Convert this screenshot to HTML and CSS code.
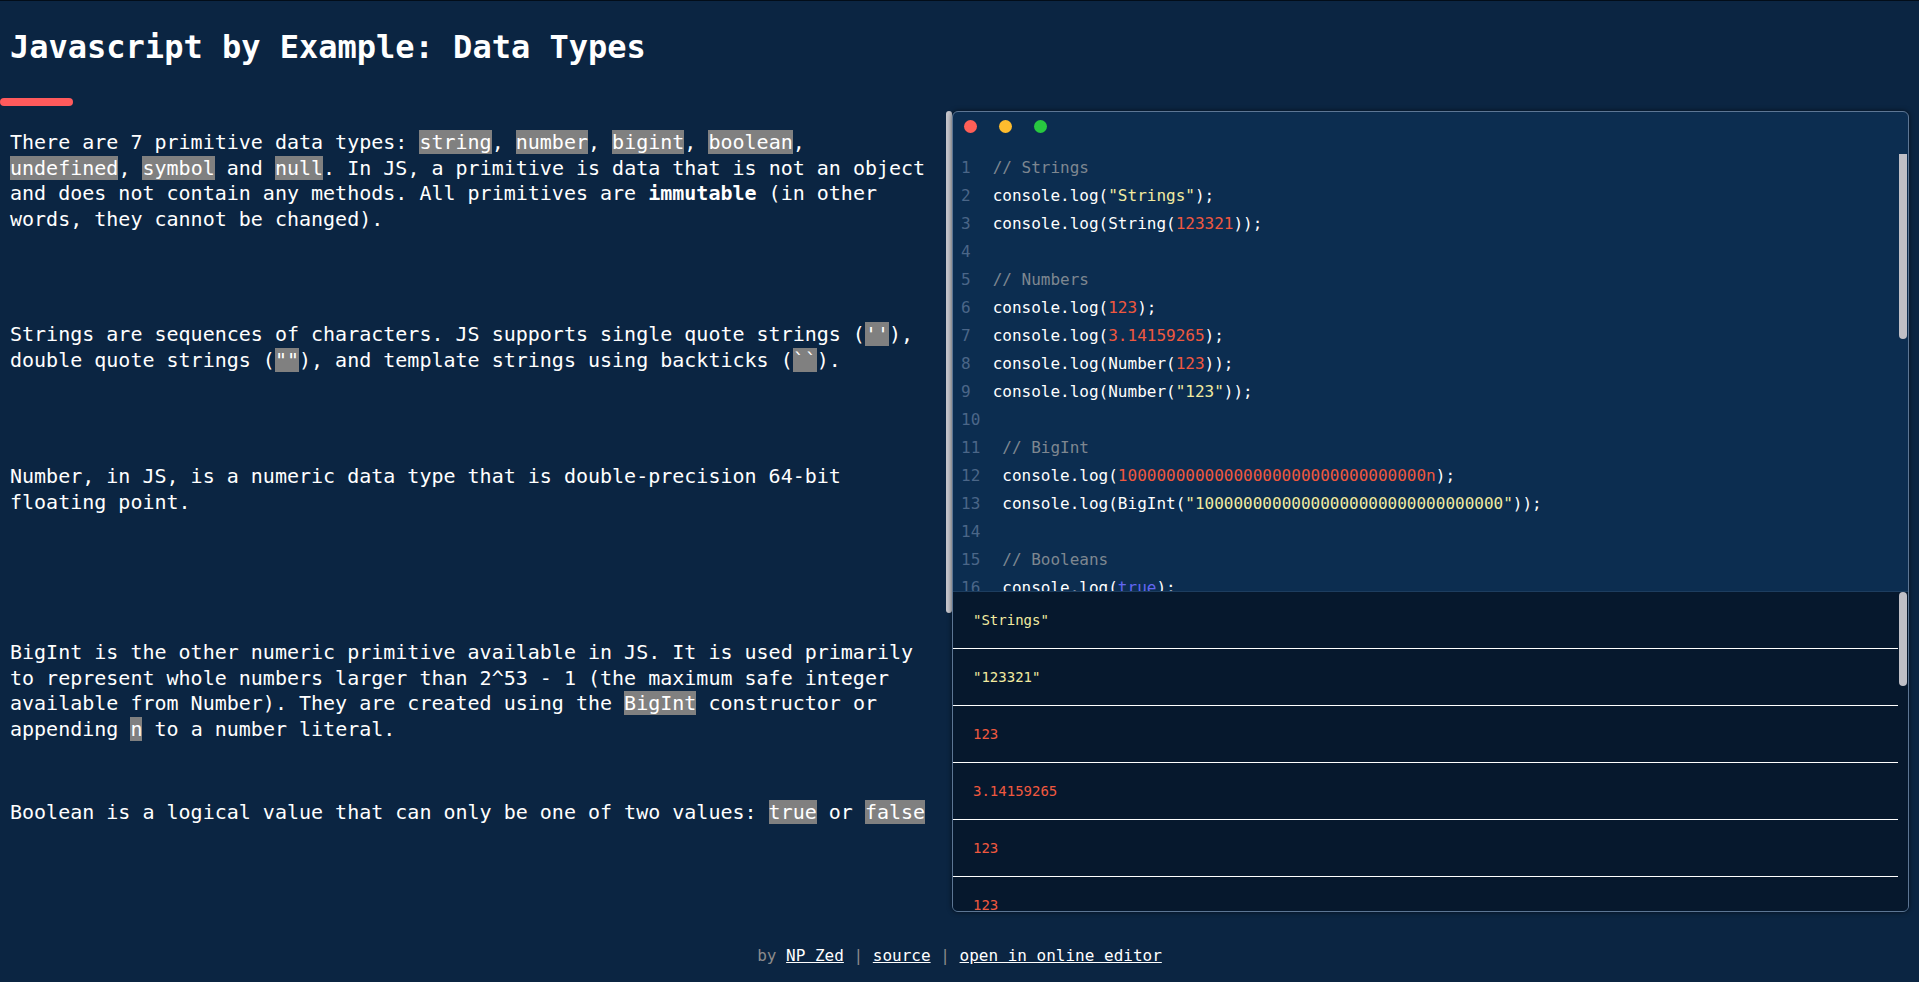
FILE: index.html
```html
<!DOCTYPE html>
<html lang="en">
<head>
<meta charset="utf-8">
<title>Javascript by Example: Data Types</title>
<link rel="stylesheet" href="styles.css">
</head>
<body>
<header class="top">
  <h1 class="title">Javascript by Example: Data Types</h1>
  <div class="accent"></div>
</header>
<main class="main">
  <section class="notes">
    <p class="note">There are 7 primitive data types: <code>string</code>, <code>number</code>, <code>bigint</code>, <code>boolean</code>, <code>undefined</code>, <code>symbol</code> and <code>null</code>. In JS, a primitive is data that is not an object and does not contain any methods. All primitives are <strong>immutable</strong> (in other words, they cannot be changed).</p>
    <p class="note gap-a">Strings are sequences of characters. JS supports single quote strings (<code>''</code>), double quote strings (<code>""</code>), and template strings using backticks (<code>``</code>).</p>
    <p class="note gap-b">Number, in JS, is a numeric data type that is double-precision 64-bit floating point.</p>
    <p class="note gap-c">BigInt is the other numeric primitive available in JS. It is used primarily to represent whole numbers larger than 2^53 - 1 (the maximum safe integer available from Number). They are created using the <code>BigInt</code> constructor or appending <code>n</code> to a number literal.</p>
    <p class="note gap-d">Boolean is a logical value that can only be one of two values: <code>true</code> or <code>false</code></p>
  </section>
  <div class="rail"><div class="rail-thumb"></div></div>
  <section class="editor">
    <div class="chrome">
      <span class="dot dot-red"></span>
      <span class="dot dot-yellow"></span>
      <span class="dot dot-green"></span>
    </div>
    <div class="pane pane-code">
      <div class="code">
        <div class="line"><span class="ln">1</span><span class="cm">// Strings</span></div>
        <div class="line"><span class="ln">2</span><span>console.log(<span class="st">"Strings"</span>);</span></div>
        <div class="line"><span class="ln">3</span><span>console.log(String(<span class="nu">123321</span>));</span></div>
        <div class="line"><span class="ln">4</span></div>
        <div class="line"><span class="ln">5</span><span class="cm">// Numbers</span></div>
        <div class="line"><span class="ln">6</span><span>console.log(<span class="nu">123</span>);</span></div>
        <div class="line"><span class="ln">7</span><span>console.log(<span class="nu">3.14159265</span>);</span></div>
        <div class="line"><span class="ln">8</span><span>console.log(Number(<span class="nu">123</span>));</span></div>
        <div class="line"><span class="ln">9</span><span>console.log(Number(<span class="st">"123"</span>));</span></div>
        <div class="line"><span class="ln">10</span></div>
        <div class="line"><span class="ln">11</span><span class="cm">// BigInt</span></div>
        <div class="line"><span class="ln">12</span><span>console.log(<span class="nu">10000000000000000000000000000000n</span>);</span></div>
        <div class="line"><span class="ln">13</span><span>console.log(BigInt(<span class="st">"10000000000000000000000000000000"</span>));</span></div>
        <div class="line"><span class="ln">14</span></div>
        <div class="line"><span class="ln">15</span><span class="cm">// Booleans</span></div>
        <div class="line"><span class="ln">16</span><span>console.log(<span class="kw">true</span>);</span></div>
      </div>
      <div class="thumb thumb-code"></div>
    </div>
    <div class="pane pane-console">
      <div class="console">
        <div class="out st">"Strings"</div>
        <div class="out st">"123321"</div>
        <div class="out nu">123</div>
        <div class="out nu">3.14159265</div>
        <div class="out nu">123</div>
        <div class="out nu">123</div>
      </div>
      <div class="thumb thumb-console"></div>
    </div>
  </section>
</main>
<footer class="foot">
  <span class="muted">by</span> <a href="#" class="link">NP Zed</a> <span class="muted">|</span> <a href="#" class="link">source</a> <span class="muted">|</span> <a href="#" class="link">open in online editor</a>
</footer>
</body>
</html>
```
FILE: styles.css
```css
html, body {
  margin: 0;
  padding: 0;
}

body {
  background: #0b2542;
  color: #ffffff;
  font-family: "DejaVu Sans Mono", monospace;
  border-top: 1px solid #020d19;
  overflow: hidden;
  height: 981px;
}

.top {
  display: flex;
  flex-direction: column;
}

.title {
  margin: 28px 0 0 0;
  padding-left: 10px;
  font-size: 32px;
  line-height: 37px;
  font-weight: bold;
  color: #ffffff;
}

.accent {
  margin-top: 32px;
  width: 73px;
  height: 8px;
  border-radius: 4px;
  background: #ff5a5c;
}

.main {
  display: flex;
  margin-top: 5px;
  height: 801px;
}

.notes {
  width: 946px;
  flex: none;
  box-sizing: border-box;
  overflow: hidden;
  padding: 19px 0 0 10px;
}

.rail {
  width: 6px;
  flex: none;
}

.rail-thumb {
  height: 502px;
  border-radius: 3px;
  background: #c5c5cb;
}

.note {
  margin: 0;
  width: 920px;
  font-size: 20px;
  line-height: 25.5px;
  color: #ffffff;
}

.note code {
  font: inherit;
  background: #808080;
  color: #ffffff;
}

.note strong {
  font-weight: bold;
}

.gap-a { margin-top: 90px; }
.gap-b { margin-top: 91px; }
.gap-c { margin-top: 125px; }
.gap-d { margin-top: 58px; }

.editor {
  width: 957px;
  flex: none;
  box-sizing: border-box;
  border: 1px solid #5d7694;
  border-radius: 6px;
  box-shadow: 0 0 5px rgba(0, 0, 0, 0.6);
  background: #0c2d50;
  overflow: hidden;
  display: flex;
  flex-direction: column;
}

.chrome {
  height: 42px;
  flex: none;
  box-sizing: border-box;
  padding: 8px 0 0 11px;
  display: flex;
  gap: 22px;
}

.dot {
  width: 13px;
  height: 13px;
  border-radius: 50%;
}

.dot-red { background: #ff5f57; }
.dot-yellow { background: #febc2e; }
.dot-green { background: #28c840; }

.pane {
  position: relative;
  overflow: hidden;
}

.pane-code {
  height: 437px;
  flex: none;
}

.pane-console {
  flex: 1;
  min-height: 0;
  background: #06182d;
  border-top: 1px solid #1d3d5f;
}

.code {
  margin-right: 10px;
  font-size: 16px;
  color: #ffffff;
}

.line {
  display: flex;
  height: 28px;
  line-height: 28px;
  padding-left: 8px;
  white-space: pre;
}

.ln {
  color: #4b6688;
  margin-right: 22px;
}

.cm { color: #7e8790; }
.st { color: #f2eba0; }
.nu { color: #f0583f; }
.kw { color: #6266f2; }

.console {
  margin-right: 10px;
  font-size: 14px;
}

.out {
  padding: 20px 20px;
  line-height: 16px;
  border-bottom: 1px solid #ffffff;
}

.thumb {
  position: absolute;
  right: 1px;
  width: 8px;
  border-radius: 4px;
  background: #bfbfc6;
}

.thumb-code {
  top: -3px;
  height: 188px;
}

.thumb-console {
  top: 0;
  height: 94px;
}

.foot {
  margin-top: 34px;
  text-align: center;
  font-size: 16px;
  line-height: 19px;
}

.muted {
  color: #8b8b8b;
}

.link {
  color: #ffffff;
  text-decoration: underline;
}
```
